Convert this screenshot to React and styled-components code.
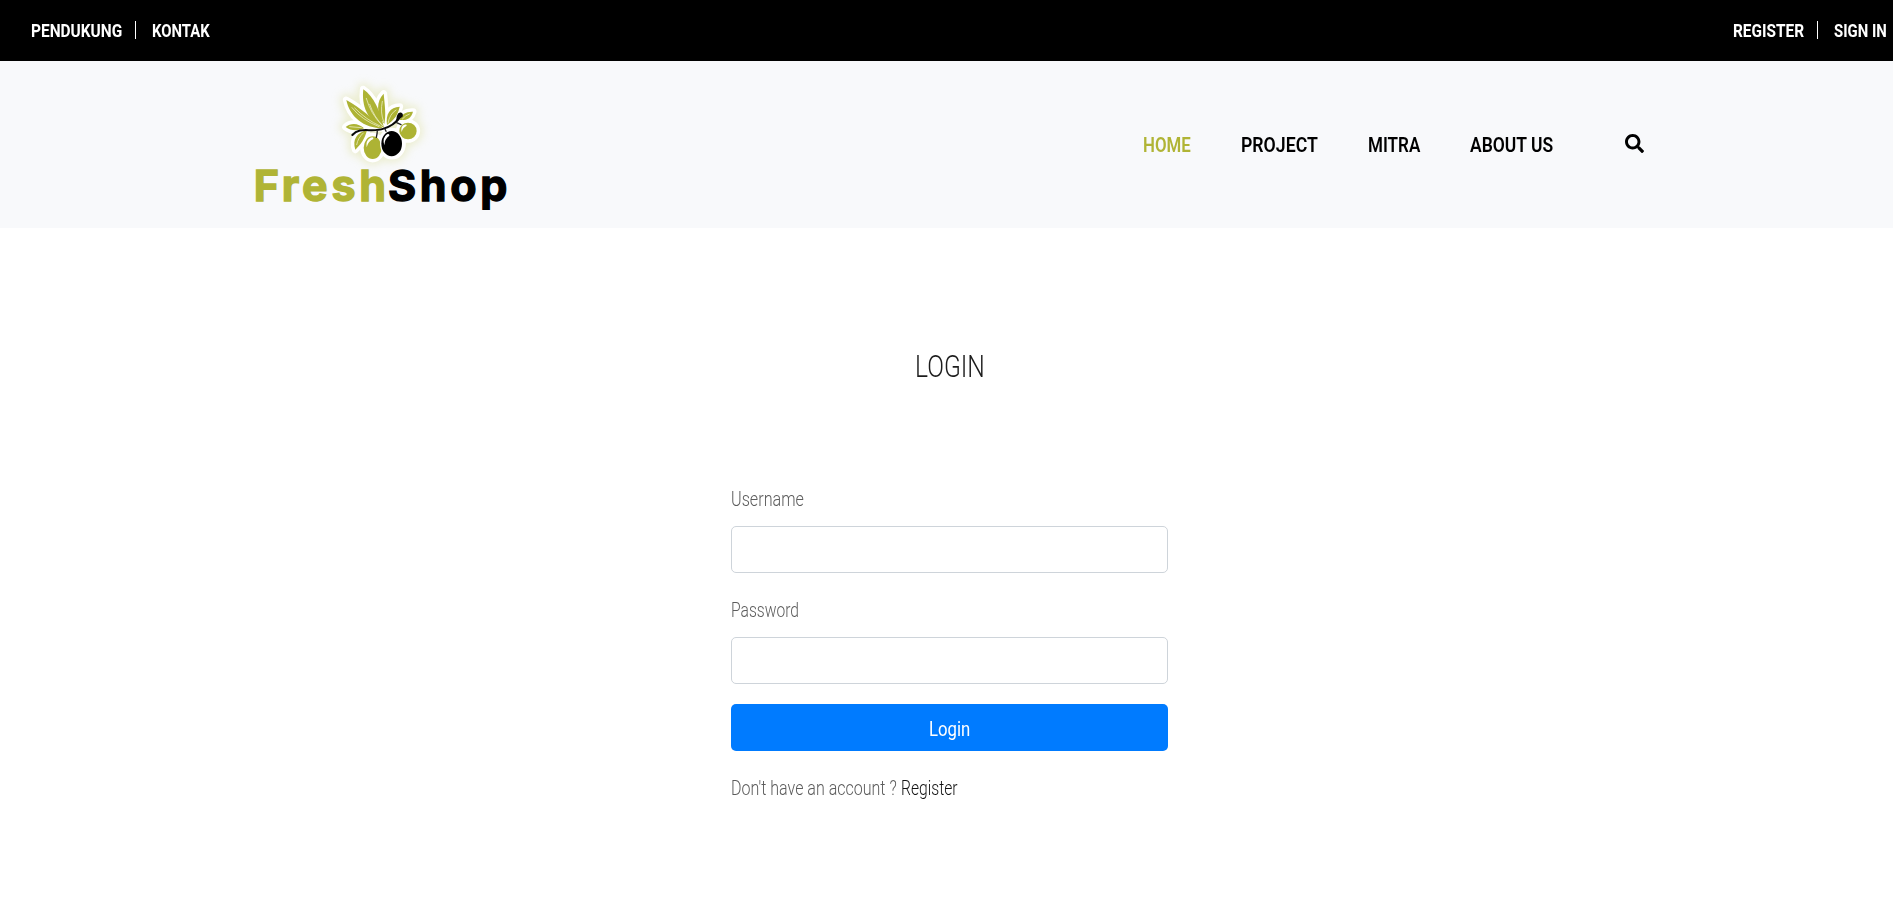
import React, { useLayoutEffect, useRef, useState } from "react";
import styled, { createGlobalStyle } from "styled-components";
import { FaSearch } from "react-icons/fa";

const GlobalStyle = createGlobalStyle`
  * { box-sizing: border-box; }
  body {
    margin: 0;
    background: #fff;
    color: #5c5c5c;
    font-family: Roboto, "Liberation Sans", sans-serif;
    overflow-x: hidden;
  }
  a { color: inherit; text-decoration: none; }
`;

const TextBox = styled.span`
  display: inline-block;
  width: ${(p) => p.$width}px;
  white-space: nowrap;
`;

const TextRun = styled.span`
  display: inline-block;
  transform-origin: 0 50%;
`;

/* Condenses a line of text to the given width. */
function Condensed({ width, children }) {
  const ref = useRef(null);
  const [scale, setScale] = useState(1);
  useLayoutEffect(() => {
    setScale(width / ref.current.offsetWidth);
  }, [width, children]);
  return (
    <TextBox $width={width}>
      <TextRun ref={ref} style={{ transform: `scaleX(${scale})` }}>
        {children}
      </TextRun>
    </TextBox>
  );
}

const TopBar = styled.div`
  display: flex;
  justify-content: space-between;
  align-items: center;
  height: 61px;
  padding: 0 6px 0 31px;
  background: #000;
`;

const TopLinks = styled.div`
  display: flex;
  align-items: center;
`;

const TopLink = styled.a`
  color: #fff;
  font-size: 18px;
  font-weight: 700;
  height: 18px;
  margin-bottom: 1px;
  line-height: 20px;
  & + & {
    margin-left: 13px;
    padding-left: 16px;
    border-left: 1px solid #fff;
  }
`;

const Header = styled.header`
  display: flex;
  justify-content: space-between;
  height: 167px;
  padding: 0 249px 0 240px;
  background: #f8f9fb;
`;

const LogoArt = styled.svg`
  display: block;
  width: 280px;
  height: 158px;
  margin-top: 9px;
`;

const Nav = styled.nav`
  display: flex;
  align-items: center;
  gap: 50px;
  height: 167px;
`;

const NavLink = styled.a`
  color: ${(p) => (p.$active ? "#b0b435" : "#000")};
  font-size: 20px;
  font-weight: 600;
  line-height: 24px;
`;

const SearchButton = styled.a`
  display: flex;
  margin: 0 0 2px 22px;
  color: #000;
`;

const Main = styled.main`
  display: flex;
  flex-direction: column;
  align-items: center;
  padding: 119px 0 0 6px;
`;

const Title = styled.h1`
  margin: 0;
  color: #1c1c1c;
  font-size: 31px;
  font-weight: 300;
  line-height: 40px;
`;

const Form = styled.form`
  display: flex;
  flex-direction: column;
  width: 437px;
  margin-top: 97px;
`;

const Field = styled.div`
  margin-bottom: ${(p) => p.$gap}px;
`;

const Label = styled.label`
  display: block;
  height: 42px;
  font-size: 19.5px;
  font-weight: 300;
  line-height: 32px;
`;

const Input = styled.input`
  display: block;
  width: 100%;
  height: 47px;
  padding: 6px 12px;
  border: 1px solid #ced4da;
  border-radius: 5px;
  background: #fff;
  outline: none;
`;

const SubmitButton = styled.button`
  height: 47px;
  padding: 2px 0 0;
  border: 0;
  border-radius: 5px;
  background: #007bff;
  color: #fff;
  font: 400 20px/30px Roboto, "Liberation Sans", sans-serif;
`;

const Footnote = styled.p`
  display: flex;
  gap: 4px;
  margin: 22px 0 0;
  font-size: 19.5px;
  font-weight: 300;
  line-height: 32px;
`;

const FootLink = styled.a`
  color: #111;
`;

function Logo() {
  return (
    <LogoArt viewBox="0 0 840 474">
      <defs>
        <filter id="glow" x="-30%" y="-30%" width="160%" height="160%">
          <feGaussianBlur stdDeviation="12" />
        </filter>
        <g id="shapes">
          <path d="M432 171C382 153 364 105 370 56C401 76 422 126 432 171Z" />
          <path d="M429 173C370 173 329 137 319 88C361 110 397 144 429 173Z" />
          <path d="M433 160C408 128 409 91 431 69C434 102 439 132 433 160Z" />
          <path d="M441 163C436 130 450 109 479 108C474 134 460 149 441 163Z" />
          <path d="M479 148C484 130 499 122 519 123C514 143 500 150 479 148Z" />
          <path d="M317 169C332 155 357 157 372 173C351 182 333 180 317 169Z" />
          <path d="M346 237C336 207 351 185 381 179C374 205 363 221 346 237Z" />
          <ellipse cx="504" cy="181" rx="26" ry="25" />
          <ellipse cx="398" cy="231" rx="27" ry="34" />
          <ellipse cx="456" cy="219" rx="31" ry="37" />
        </g>
      </defs>
      <g transform="translate(0 2)">
        <use href="#shapes" fill="#dfe2a4" stroke="#dfe2a4" strokeWidth="38" strokeLinejoin="round" opacity="0.5" filter="url(#glow)" />
        <use href="#shapes" fill="#fff" stroke="#fff" strokeWidth="21" strokeLinejoin="round" />
        <use href="#shapes" fill="#adb334" />
        <g fill="none" stroke="#e8eabd" strokeWidth="2.5" strokeLinecap="round">
          <path d="M379 83Q391 128 426 164M389 101Q402 139 429 166" />
          <path d="M336 111Q365 148 417 168M344 112Q378 147 420 166" />
          <path d="M427 92Q420 125 431 153M468 118Q449 130 444 157M508 130Q496 134 487 145" />
          <path d="M329 168L364 171M370 187Q354 201 350 222" />
        </g>
        <ellipse cx="455" cy="219" rx="35" ry="41" fill="#fff" />
        <ellipse cx="455" cy="219" rx="31" ry="38" fill="#000" />
        <path d="M337 193C360 166 394 187 431 174C452 167 466 158 474 145" fill="none" stroke="#090909" strokeWidth="6" strokeLinecap="round" />
        <path d="M464 158C473 148 466 140 475 128C483 121 493 130 487 139C478 143 479 152 464 158Z" fill="#080808" />
        <path d="M412 179Q412 188 409 200M435 175L438 182M470 156L483 162" fill="none" stroke="#222" strokeWidth="4" strokeLinecap="round" />
        <path d="M433 224Q426 202 441 191Q449 188 448 195Q434 204 433 224Z" fill="#fff" />
        <path d="M380 230Q376 212 390 202Q401 197 400 205Q385 210 380 230Z" fill="#fff" />
        <path d="M485 184Q481 170 491 163Q501 159 500 165Q488 171 485 184Z" fill="#fff" />
      </g>
      <g fontFamily="Inter, sans-serif" fontWeight="700" fontSize="129">
        <text x="41" y="393" fill="#b0b435" stroke="#b0b435" strokeWidth="4" textLength="397" lengthAdjust="spacing">Fresh</text>
        <text x="444" y="393" fill="#000" stroke="#000" strokeWidth="4" textLength="358" lengthAdjust="spacing">Shop</text>
      </g>
    </LogoArt>
  );
}

export default function App() {
  return (
    <>
      <GlobalStyle />
      <TopBar>
        <TopLinks>
          <TopLink href="#"><Condensed width={91}>PENDUKUNG</Condensed></TopLink>
          <TopLink href="#"><Condensed width={58}>KONTAK</Condensed></TopLink>
        </TopLinks>
        <TopLinks>
          <TopLink href="#"><Condensed width={71}>REGISTER</Condensed></TopLink>
          <TopLink href="#"><Condensed width={53}>SIGN IN</Condensed></TopLink>
        </TopLinks>
      </TopBar>
      <Header>
        <Logo />
        <Nav>
          <NavLink href="#" $active><Condensed width={48}>HOME</Condensed></NavLink>
          <NavLink href="#"><Condensed width={77}>PROJECT</Condensed></NavLink>
          <NavLink href="#"><Condensed width={52}>MITRA</Condensed></NavLink>
          <NavLink href="#"><Condensed width={83}>ABOUT US</Condensed></NavLink>
          <SearchButton href="#"><FaSearch size={19} /></SearchButton>
        </Nav>
      </Header>
      <Main>
        <Title><Condensed width={70}>LOGIN</Condensed></Title>
        <Form>
          <Field $gap={22}>
            <Label htmlFor="username"><Condensed width={73}>Username</Condensed></Label>
            <Input id="username" type="text" />
          </Field>
          <Field $gap={20}>
            <Label htmlFor="password"><Condensed width={68}>Password</Condensed></Label>
            <Input id="password" type="password" />
          </Field>
          <SubmitButton type="button"><Condensed width={41}>Login</Condensed></SubmitButton>
          <Footnote>
            <Condensed width={166}>Don't have an account ?</Condensed>
            <FootLink href="#"><Condensed width={57}>Register</Condensed></FootLink>
          </Footnote>
        </Form>
      </Main>
    </>
  );
}
